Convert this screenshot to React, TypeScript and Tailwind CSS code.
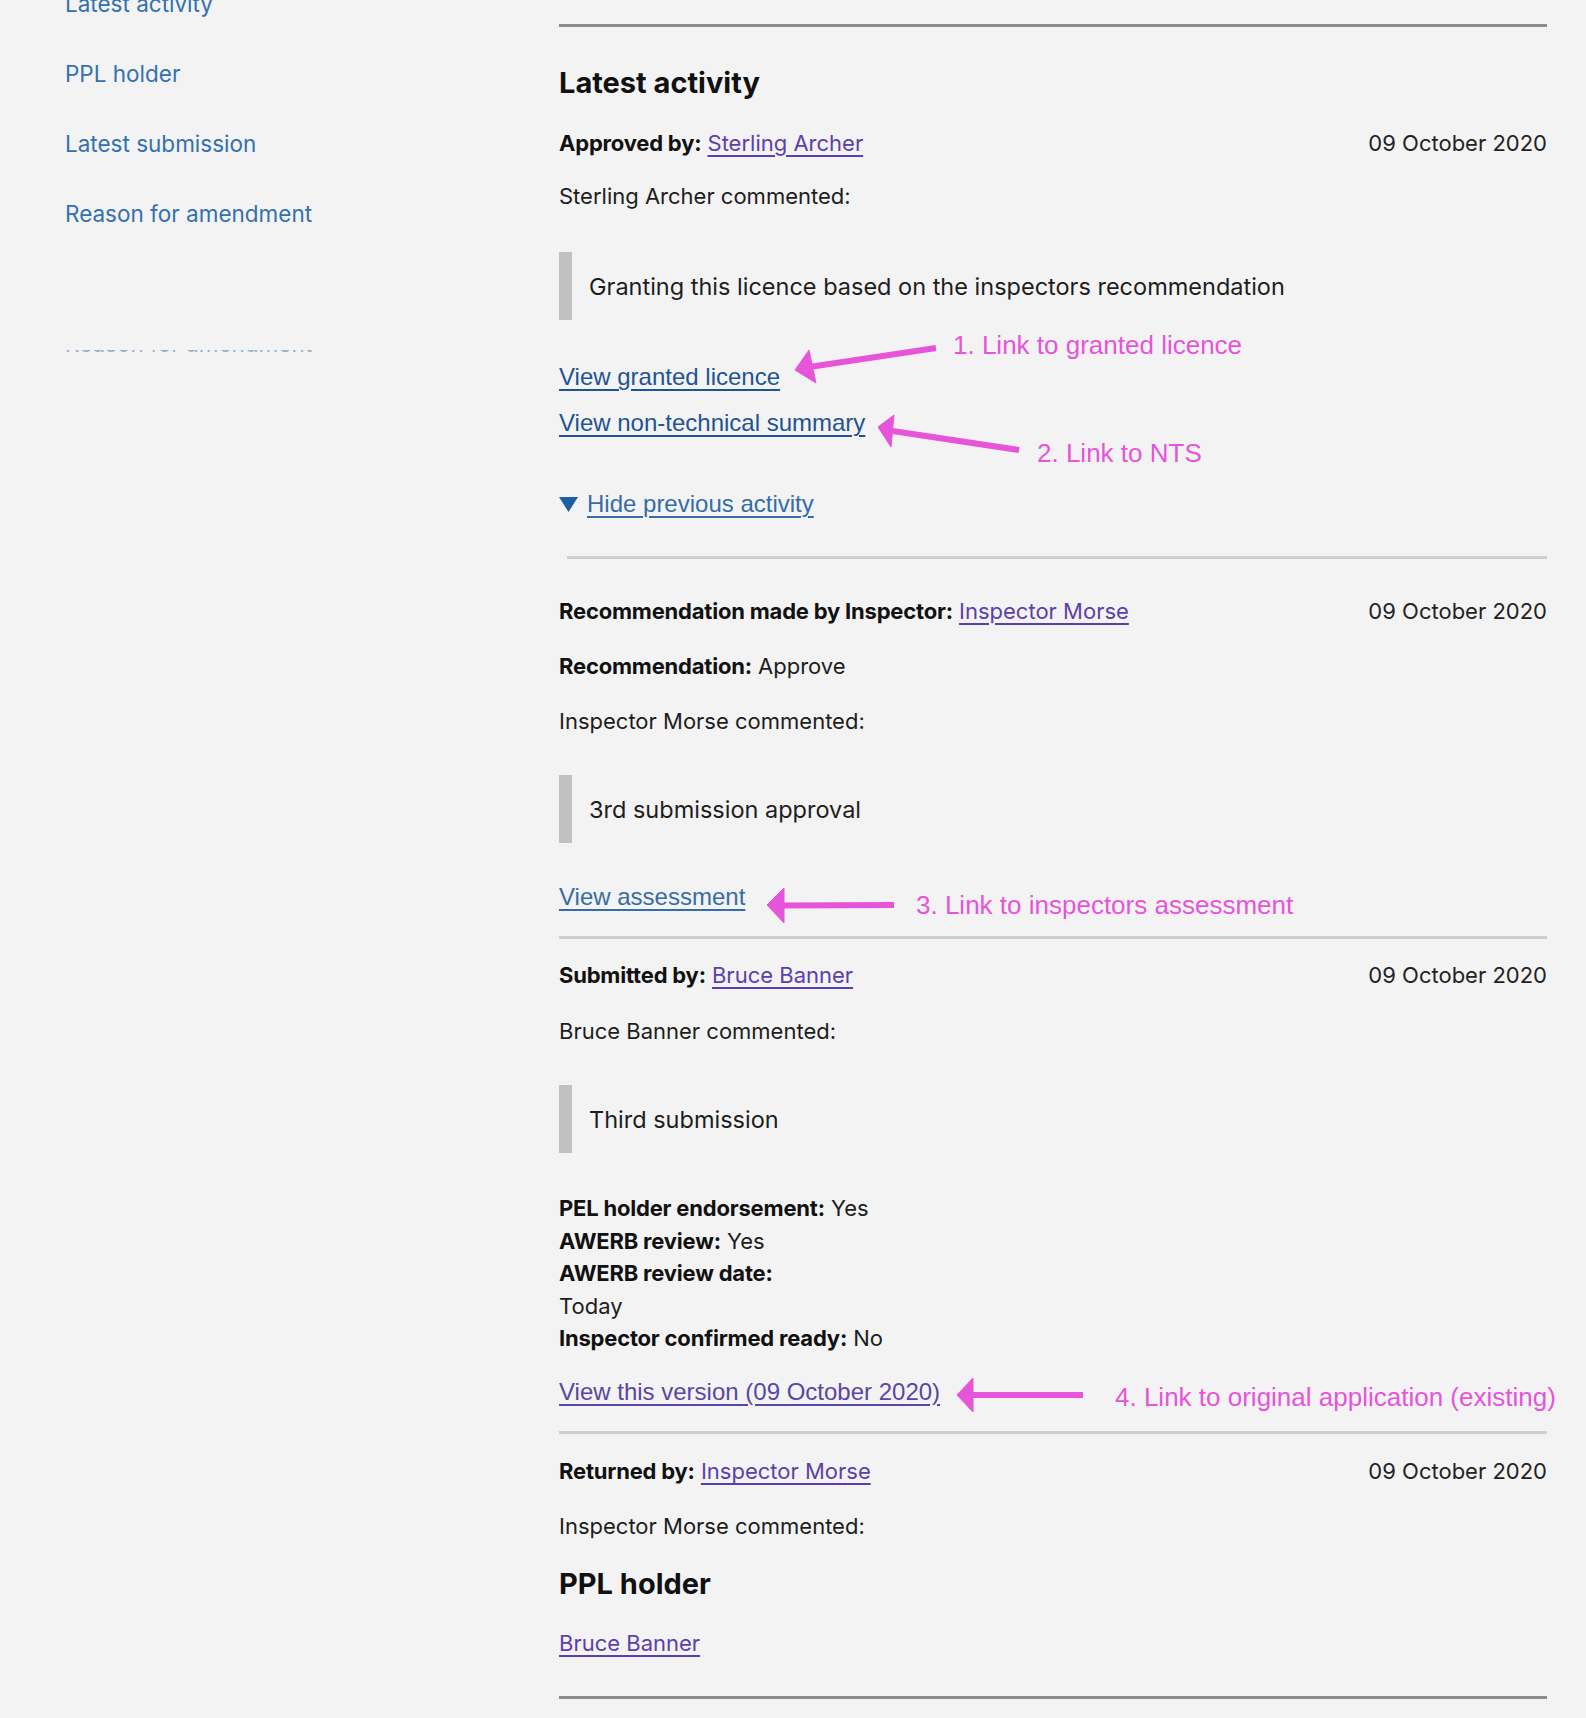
import type { ReactNode } from "react";

const pink = "#e655d9";

const PersonLink = ({ children }: { children: ReactNode }) => (
  <a href="#" className="text-[#5b40ad] underline decoration-[1.5px] underline-offset-[4px]">
    {children}
  </a>
);

const ActionLink = ({ children, tone = "dark" }: { children: ReactNode; tone?: "dark" | "light" | "visited" }) => {
  const color =
    tone === "dark" ? "text-[#1f5494]" : tone === "light" ? "text-[#366ca8]" : "text-[#5a45a8]";
  return (
    <a
      href="#"
      className={`${color} font-['Liberation_Sans',Arial,sans-serif] text-[24px] leading-[33px] underline decoration-2 underline-offset-[4px]`}
    >
      {children}
    </a>
  );
};

const Quote = ({ children }: { children: ReactNode }) => (
  <div className="border-l-[13px] border-[#c0c1c3] pl-[17px] py-[17.5px] text-[23.5px]">{children}</div>
);

const Header = ({ label, person }: { label: string; person: string }) => (
  <div className="flex items-start justify-between">
    <p>
      <span className="font-bold tracking-[-0.2px] text-[#111]">{label}</span> <PersonLink>{person}</PersonLink>
    </p>
    <p className="text-[#222]">09 October 2020</p>
  </div>
);

const Arrow = ({ tail, tip, a, b }: { tail: [number, number]; tip: [number, number]; a: [number, number]; b: [number, number] }) => {
  const mid: [number, number] = [(a[0] + b[0]) / 2, (a[1] + b[1]) / 2];
  return (
    <g fill={pink} stroke={pink}>
      <line x1={tail[0]} y1={tail[1]} x2={mid[0]} y2={mid[1]} strokeWidth={6} />
      <polygon points={`${tip[0]},${tip[1]} ${a[0]},${a[1]} ${b[0]},${b[1]}`} strokeWidth={1} />
    </g>
  );
};

const Note = ({ x, y, children }: { x: number; y: number; children: ReactNode }) => (
  <p
    className="absolute whitespace-nowrap font-['Liberation_Sans',Arial,sans-serif] text-[26px] leading-[30px] text-[#e655d9]"
    style={{ left: x, top: y }}
  >
    {children}
  </p>
);

export default function App() {
  const sideLinks = ["Latest activity", "PPL holder", "Latest submission", "Reason for amendment"];

  return (
    <div className="relative min-h-[1718px] w-full overflow-hidden bg-[#f3f3f3] font-['Inter','Noto_Sans',sans-serif] text-[22px] leading-[33px] text-[#1d1d1d]">
      <div className="flex">
        {/* side navigation */}
        <nav className="w-[559px] shrink-0 pl-[65px] text-[22.5px]">
          <ul className="-mt-[13.5px] flex flex-col gap-[37px]">
            {sideLinks.map((l) => (
              <li key={l}>
                <a href="#" className="text-[#3470b0]">
                  {l}
                </a>
              </li>
            ))}
          </ul>
          <div className="mt-[120px] h-[4px] overflow-hidden">
            <p className="-mt-[23px] text-[#3470b0]/50">Reason for amendment</p>
          </div>
        </nav>

        {/* activity column */}
        <main className="w-[988px]">
          <div className="mt-[24px] h-[3px] bg-[#8b8d8f]" />
          <h2 className="mt-[38px] text-[29px] font-bold leading-[36px] text-[#111]">Latest activity</h2>

          <div className="mt-[25.5px]">
            <Header label="Approved by:" person="Sterling Archer" />
            <p className="mt-[20px]">Sterling Archer commented:</p>
            <div className="mt-[39.5px]">
              <Quote>Granting this licence based on the inspectors recommendation</Quote>
            </div>
            <div className="mt-[40px]">
              <ActionLink>View granted licence</ActionLink>
            </div>
            <div className="mt-[12px]">
              <ActionLink>View non-technical summary</ActionLink>
            </div>
            <div className="mt-[47px] flex items-center gap-[9px]">
              <svg width="19" height="15" viewBox="0 0 19 15" className="mt-[1px]">
                <polygon points="0,0 19,0 9.5,15" fill="#1d5fa0" />
              </svg>
              <ActionLink tone="light">Hide previous activity</ActionLink>
            </div>
          </div>

          <div className="ml-[8px] mt-[36px] h-[3px] bg-[#cdcecf]" />

          <div className="mt-[35.5px]">
            <Header label="Recommendation made by Inspector:" person="Inspector Morse" />
            <p className="mt-[22px]">
              <span className="font-bold tracking-[-0.2px] text-[#111]">Recommendation:</span> Approve
            </p>
            <p className="mt-[22px]">Inspector Morse commented:</p>
            <div className="mt-[37.5px]">
              <Quote>3rd submission approval</Quote>
            </div>
            <div className="mt-[37px]">
              <ActionLink tone="light">View assessment</ActionLink>
            </div>
          </div>

          <div className="mt-[22px] h-[3px] bg-[#cdcecf]" />

          <div className="mt-[19.5px]">
            <Header label="Submitted by:" person="Bruce Banner" />
            <p className="mt-[23px]">Bruce Banner commented:</p>
            <div className="mt-[37.5px]">
              <Quote>Third submission</Quote>
            </div>
            <dl className="mt-[39px] leading-[32.5px]">
              <div>
                <dt className="inline font-bold tracking-[-0.2px] text-[#111]">PEL holder endorsement:</dt>{" "}
                <dd className="inline">Yes</dd>
              </div>
              <div>
                <dt className="inline font-bold tracking-[-0.2px] text-[#111]">AWERB review:</dt>{" "}
                <dd className="inline">Yes</dd>
              </div>
              <dt className="font-bold tracking-[-0.2px] text-[#111]">AWERB review date:</dt>
              <dd>Today</dd>
              <div>
                <dt className="inline font-bold tracking-[-0.2px] text-[#111]">Inspector confirmed ready:</dt>{" "}
                <dd className="inline">No</dd>
              </div>
            </dl>
            <div className="mt-[20px]">
              <ActionLink tone="visited">View this version (09 October 2020)</ActionLink>
            </div>
          </div>

          <div className="mt-[22px] h-[3px] bg-[#cdcecf]" />

          <div className="mt-[21.5px]">
            <Header label="Returned by:" person="Inspector Morse" />
            <p className="mt-[22px]">Inspector Morse commented:</p>
          </div>

          <h2 className="mt-[22.5px] text-[29px] font-bold leading-[36px] text-[#111]">PPL holder</h2>
          <p className="mt-[25.5px]">
            <PersonLink>Bruce Banner</PersonLink>
          </p>
          <div className="mt-[35.5px] h-[3px] bg-[#8b8d8f]" />
        </main>
      </div>

      {/* review annotations drawn over the page */}
      <svg className="pointer-events-none absolute left-0 top-0" width="1586" height="1718">
        <Arrow tail={[936, 348]} tip={[795, 370]} a={[809, 350]} b={[816, 383]} />
        <Arrow tail={[1019, 450]} tip={[878, 427]} a={[894, 415]} b={[891, 447]} />
        <Arrow tail={[894, 905]} tip={[767, 905]} a={[784, 888]} b={[784, 923]} />
        <Arrow tail={[1083, 1395]} tip={[957, 1395]} a={[973, 1378]} b={[973, 1412]} />
      </svg>
      <Note x={953} y={329.5}>1. Link to granted licence</Note>
      <Note x={1037} y={437.5}>2. Link to NTS</Note>
      <Note x={916} y={889.5}>3. Link to inspectors assessment</Note>
      <Note x={1115} y={1381.5}>4. Link to original application (existing)</Note>
    </div>
  );
}
